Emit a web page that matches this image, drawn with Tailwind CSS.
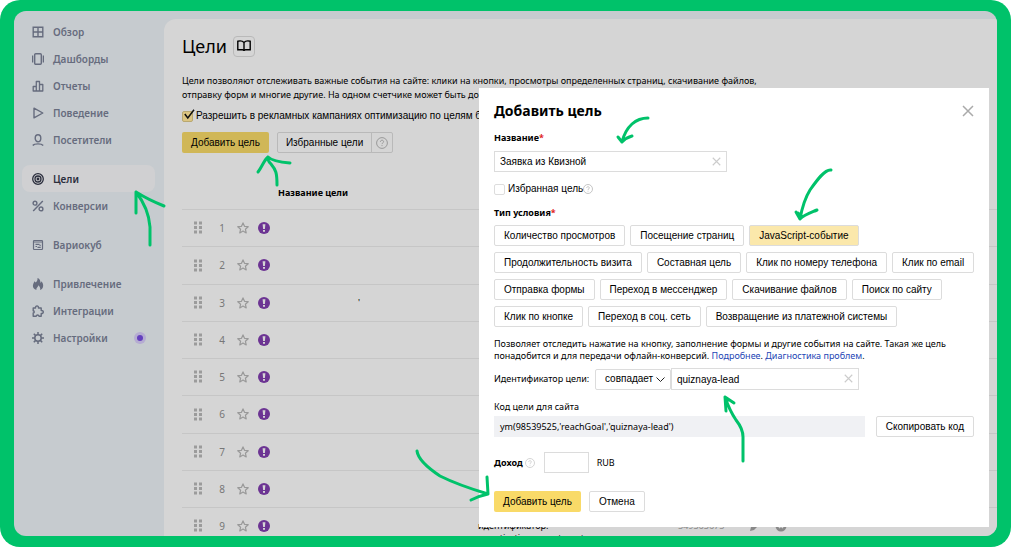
<!DOCTYPE html>
<html lang="ru">
<head>
<meta charset="utf-8">
<meta name="viewport" content="width=device-width, initial-scale=1">
<title>Цели</title>
<script src="https://cdn.jsdelivr.net/npm/@tailwindcss/browser@4"></script>
</head>
<body class="bg-white font-['Noto_Sans',sans-serif] text-[9px] leading-4 text-black">
<svg class="hidden">
  <symbol id="help" viewBox="0 0 12 12"><circle cx="6" cy="6" r="5.4" fill="none" stroke="currentColor"/><path d="M4.4 4.8c0-2.1 3.2-2.1 3.2-.1 0 1.2-1.6 1.2-1.6 2.4M6 8.1v1" fill="none" stroke="currentColor"/></symbol>
  <symbol id="cross" viewBox="0 0 12 12"><path d="M1 1l10 10M11 1L1 11" fill="none" stroke="currentColor" stroke-width="1.5"/></symbol>
  <symbol id="star" viewBox="0 0 12 12"><path d="M6 .9l1.5 3.4 3.7.4-2.8 2.5.8 3.7L6 9l-3.200 1.900.8-3.700L.8 4.700l3.700-.4z" fill="none" stroke="currentColor" stroke-width="1.200" stroke-linejoin="round"/></symbol>
  <symbol id="alert" viewBox="0 0 12 12"><circle cx="6" cy="6" r="6" fill="#6c3493"/><path d="M4.600 2.200h2.800L6.900 7H5.100zM5 8h2v1.800H5z" fill="#d5d5d5"/></symbol>
  <symbol id="grip" viewBox="0 0 8 13"><path d="M0 .5h3v3H0zM5 .5h3v3H5zM0 5h3v3H0zM5 5h3v3H5zM0 9.500h3v3H0zM5 9.500h3v3H5z" fill="#9b9b9b"/></symbol>
</svg>
<div class="relative flex h-screen overflow-hidden rounded-[20px] bg-[#00c26a] px-[14px] py-[11px]">
  <div class="flex min-w-0 flex-1 overflow-hidden rounded-xl bg-[#c6cbcf]">
    <nav class="flex w-[150px] shrink-0 flex-col pt-[7px] pl-2 text-[10px] font-semibold text-[#666c7e]">
      <a href="#" class="flex h-[27px] items-center gap-[9px] px-2.5"><svg class="size-3" viewBox="0 0 12 12" fill="none" stroke="currentColor" stroke-width="1.400"><path d="M1.200 1.200h9.600v9.600H1.200zM6 1v10M1 6h10"/></svg>Обзор</a>
      <a href="#" class="flex h-[27px] items-center gap-[9px] px-2.5"><svg class="size-3" viewBox="0 0 12 12" fill="none" stroke="currentColor" stroke-width="1.400"><rect x="2.700" y=".8" width="6.600" height="10.400" rx="1"/><path d="M.6 2.500v7M11.400 2.500v7"/></svg>Дашборды</a>
      <a href="#" class="flex h-[27px] items-center gap-[9px] px-2.5"><svg class="size-3" viewBox="0 0 12 12" fill="none" stroke="currentColor" stroke-width="1.300" stroke-linejoin="round"><path d="M4.300 11V1.500h3.200V11M4.300 6.500H1.200V11h9.600V4.500H7.500"/></svg>Отчеты</a>
      <a href="#" class="flex h-[27px] items-center gap-[9px] px-2.5"><svg class="size-3" viewBox="0 0 12 12" fill="none" stroke="currentColor" stroke-width="1.400" stroke-linejoin="round"><path d="M2 1.200L10.800 6 2 10.800z"/></svg>Поведение</a>
      <a href="#" class="flex h-[27px] items-center gap-[9px] px-2.5"><svg class="size-3" viewBox="0 0 12 12" fill="none" stroke="currentColor" stroke-width="1.400"><ellipse cx="6" cy="4.300" rx="2.800" ry="3.500"/><path d="M.8 11.500C2.500 9.300 9.500 9.300 11.200 11.500"/></svg>Посетители</a>
      <a href="#" class="mt-3 mr-[9px] flex h-[27px] items-center gap-[9px] rounded-lg bg-[#d0d0d2] px-2.5 text-[#2b2e3d]"><svg class="size-3" viewBox="0 0 12 12" fill="none" stroke="currentColor" stroke-width="1.300"><circle cx="6" cy="6" r="5.300"/><circle cx="6" cy="6" r="3"/><circle cx="6" cy="6" r=".8"/></svg>Цели</a>
      <a href="#" class="flex h-[27px] items-center gap-[9px] px-2.5"><svg class="size-3" viewBox="0 0 12 12" fill="none" stroke="currentColor" stroke-width="1.400"><circle cx="3" cy="3.200" r="1.900"/><circle cx="9" cy="8.900" r="1.900"/><path d="M10.800 1L1.200 11"/></svg>Конверсии</a>
      <a href="#" class="mt-3 flex h-[27px] items-center gap-[9px] px-2.5"><svg class="size-3" viewBox="0 0 12 12" fill="none" stroke="currentColor" stroke-width="1.200"><rect x="1.500" y="1.500" width="9" height="9" rx=".8"/><path d="M1.500 3h9M3.500 5.300h4M5.500 8.300h3.200M3.500 7.500h1.500M7.500 6.300h1.200"/></svg>Вариокуб</a>
      <a href="#" class="mt-3 flex h-[27px] items-center gap-[9px] px-2.5"><svg class="size-3" viewBox="0 0 12 12" fill="currentColor"><path d="M5.500 0C9 1.500 8 4 8.800 5L9.500 3.200C11 5 11.500 7 11 9c-.4 1.500-1.500 2.500-3 3 .8-2-.3-3.400-1.700-4.800C6.200 9 4 9.500 4.500 12 2 11.500.7 9.800.9 7.600 1 5.800 2 4.800 2.400 3.200l1.300 1.300C4.800 3.500 5.800 2 5.500 0z"/></svg>Привлечение</a>
      <a href="#" class="flex h-[27px] items-center gap-[9px] px-2.5"><svg class="size-3" viewBox="0 0 12 12" fill="none" stroke="currentColor" stroke-width="1.400" stroke-linejoin="round"><path d="M1.200 3h2.300c-.4-2.800 3.400-2.800 3 0h2.700v2.500c2.800-.3 2.800 3.300 0 3v2.700H7c-.3-1.700-2.500-1.700-2.800 0h-3V8c1.400-.2 1.400-2 0-2.200z"/></svg>Интеграции</a>
      <a href="#" class="flex h-[27px] items-center gap-[9px] px-2.5"><svg class="size-3" viewBox="0 0 12 12" fill="none" stroke="currentColor" stroke-width="1.500"><circle cx="6" cy="6" r="3.200"/><path d="M6 3V0M6 12V9M3 6H0M12 6H9M3.900 3.900L1.800 1.800M8.100 3.900l2.100-2.100M3.900 8.100l-2.100 2.100M8.100 8.100l2.100 2.100"/></svg>Настройки<span class="mr-2 ml-auto flex size-3 items-center justify-center rounded-full bg-[#b5acd2]"><span class="size-1.5 rounded-full bg-[#6440bd]"></span></span></a>
    </nav>
    <main class="mt-2 min-w-0 flex-1 overflow-hidden rounded-tl-xl bg-[#d5d5d5] pt-[15px] pl-[18px]">
      <div class="flex items-center gap-1.5">
        <h1 class="text-[18px] leading-6">Цели</h1>
        <button type="button" aria-label="Справка" class="flex h-[21px] w-[22px] items-center justify-center rounded-sm border border-[#b9b9b9]"><svg class="h-3 w-3.5" viewBox="0 0 14 12" fill="none" stroke="currentColor" stroke-width="1.400"><path d="M7 10.500V2.500C5.500.8 2.500.8.8 1.200v8.600h4.700c1 0 1.500.7 1.500 1.200 0-.5.5-1.200 1.500-1.200h4.700V1.200C11.500.8 8.500.8 7 2.500"/></svg></button>
      </div>
      <p class="mt-4 leading-[14px]">Цели позволяют отслеживать важные события на сайте: клики на кнопки, просмотры определенных страниц, скачивание файлов,<br>отправку форм и многие другие. На одном счетчике может быть до 200 целей.</p>
      <label class="mt-1.5 flex items-center gap-[3px] font-['Liberation_Sans',sans-serif] text-[10px] whitespace-nowrap"><span class="relative size-[11px] shrink-0"><input type="checkbox" checked class="block size-[11px] appearance-none rounded-xs border border-[#b9a871] bg-[#dcc582]"><svg class="pointer-events-none absolute -top-0.5 left-0.5 h-3 w-[11px]" viewBox="0 0 11 12" fill="none" stroke="#111" stroke-width="1.500"><path d="M.8 5l3 4L10 .8"/></svg></span>Разрешить в рекламных кампаниях оптимизацию по целям без доступа к счетчику</label>
      <div class="mt-2 flex gap-2 font-['Liberation_Sans',sans-serif] text-[10px]">
        <button type="button" class="h-[21px] rounded-xs bg-[#d0b757] px-[9px]">Добавить цель</button>
        <div class="flex"><button type="button" class="h-[21px] rounded-l-xs border border-[#b9b9b9] px-2">Избранные цели</button><button type="button" aria-label="Помощь" class="-ml-px flex h-[21px] w-[22px] items-center justify-center rounded-r-xs border border-[#b9b9b9] text-[#999]"><svg class="size-3"><use href="#help"/></svg></button></div>
      </div>
      <table class="mt-8 w-full table-fixed text-left">
        <thead><tr class="h-6"><th class="w-24"></th><th class="w-[200px] align-top font-bold">Название цели</th><th class="w-[200px]"></th><th></th></tr></thead>
        <tbody id="goals" class="[&>tr]:h-[37px] [&>tr:nth-child(4n+2)]:h-[38px]"></tbody>
      </table>
    </main>
  </div>

  <section role="dialog" aria-labelledby="dlg" class="absolute top-[88px] right-[22px] bottom-5 w-[510px] bg-white px-[15px] pt-[11px]">
    <div class="flex items-center justify-between">
      <h2 id="dlg" class="text-[14px] leading-6 font-bold">Добавить цель</h2>
      <button type="button" aria-label="Закрыть" class="text-[#aaa]"><svg class="size-3"><use href="#cross"/></svg></button>
    </div>
    <label for="name" class="mt-[7px] block font-bold">Название<span class="text-[#e02020]">*</span></label>
    <div class="relative mt-[5px] w-[233px]"><input id="name" type="text" value="Заявка из Квизной" class="block h-[21px] w-full border border-[#dcdcdc] px-[5px] font-['Liberation_Sans',sans-serif] text-[10px] outline-none"><button type="button" aria-label="Очистить" class="absolute top-1.5 right-1.5 text-[#ccc]"><svg class="block size-[9px]"><use href="#cross"/></svg></button></div>
    <div class="mt-[9px] flex items-center font-['Liberation_Sans',sans-serif] text-[10px]"><label class="flex items-center gap-[3px]"><input type="checkbox" class="size-[11px] appearance-none rounded-xs border border-[#ddd]">Избранная цель</label><svg class="size-2.5 text-[#bbb]"><use href="#help"/></svg></div>
    <h3 class="mt-2 font-bold">Тип условия<span class="text-[#e02020]">*</span></h3>
    <div class="mt-1 -mr-1 flex flex-wrap gap-x-[5px] gap-y-1.5 font-['Liberation_Sans',sans-serif] text-[10px] [&>button]:h-[21px] [&>button]:rounded-xs [&>button]:border [&>button]:border-[#dcdcdc] [&>button]:px-[9px]">
      <button type="button">Количество просмотров</button><button type="button">Посещение страниц</button><button type="button" class="bg-[#fbe8ab]">JavaScript-событие</button>
      <button type="button">Продолжительность визита</button><button type="button">Составная цель</button><button type="button">Клик по номеру телефона</button><button type="button">Клик по email</button>
      <button type="button">Отправка формы</button><button type="button">Переход в мессенджер</button><button type="button">Скачивание файлов</button><button type="button">Поиск по сайту</button>
      <button type="button">Клик по кнопке</button><button type="button">Переход в соц. сеть</button><button type="button">Возвращение из платежной системы</button>
    </div>
    <p class="mt-[11px] leading-3">Позволяет отследить нажатие на кнопку, заполнение формы и другие события на сайте. Такая же цель<br>понадобится и для передачи офлайн-конверсий. <a href="#" class="text-[#1d46b5]">Подробнее</a>. <a href="#" class="text-[#1d46b5]">Диагностика проблем</a>.</p>
    <div class="mt-1.5 flex items-center">
      <label for="goal-id" class="w-[101px]">Идентификатор цели:</label>
      <div class="relative"><select aria-label="Условие" class="block h-[21px] w-[76px] appearance-none rounded-xs border border-[#dcdcdc] px-[9px] font-['Liberation_Sans',sans-serif] text-[10px]"><option>совпадает</option></select><svg class="pointer-events-none absolute top-2 right-1.5 h-[5px] w-[9px]" viewBox="0 0 9 5" fill="none" stroke="#222"><path d="M.5.5l4 4 4-4"/></svg></div>
      <div class="relative w-[188px]"><input id="goal-id" type="text" value="quiznaya-lead" class="block h-[22px] w-full border border-[#dcdcdc] px-[5px] font-['Liberation_Sans',sans-serif] text-[10px] outline-none"><button type="button" aria-label="Очистить" class="absolute top-1.5 right-1.5 text-[#ccc]"><svg class="block size-[9px]"><use href="#cross"/></svg></button></div>
    </div>
    <p class="mt-[9px]">Код цели для сайта</p>
    <div class="mt-px flex gap-[11px]"><code class="flex h-[21px] flex-1 items-center bg-[#f0f1f4] px-1.5 font-['Noto_Sans',sans-serif] text-[9px]">ym(98539525,'reachGoal','quiznaya-lead')</code><button type="button" class="h-[21px] rounded-xs border border-[#dcdcdc] px-[9px] font-['Liberation_Sans',sans-serif] text-[10px]">Скопировать код</button></div>
    <div class="mt-[15px] flex items-center"><label for="income" class="mr-0.5 font-bold">Доход</label><svg class="size-2.5 text-[#ccc]"><use href="#help"/></svg><input id="income" type="text" class="ml-[9px] h-[21px] w-[45px] border border-[#dcdcdc]"><span class="ml-2">RUB</span></div>
    <div class="mt-[18px] flex gap-2 font-['Liberation_Sans',sans-serif] text-[10px]"><button type="button" class="h-[21px] rounded-xs bg-[#f9da68] px-[9px]">Добавить цель</button><button type="button" class="h-[21px] rounded-xs border border-[#dcdcdc] px-[9px]">Отмена</button></div>
  </section>

  <svg class="pointer-events-none absolute top-0 left-0" width="1011" height="547" viewBox="0 0 1011 547" fill="none" stroke="#00c26a" stroke-width="3" stroke-linecap="round" stroke-linejoin="round">
    <path d="M150 245v-18c-1-14-7-26-14-35M136 213v-21c8 5 18 10 28 14"/>
    <path d="M277 185c0-12-1-15-6-21-3-3-4-5-3-7M258 172c4-5 6-12 10-15 3 3 10 5 22 6"/>
    <path d="M648 118c-12 0-22 8-26 24M618 137l4 5c3-3 6-5 10-6"/>
    <path d="M831 170c-6-1-14 10-21 20-5 8-8 18-10 29M796 212l4 7c4-4 10-6 17-9M798 213l3 4"/>
    <path d="M743 461v-24c0-6-3-12-7-17-4-6-8-14-11-23M726 411l-1-14 9 6M727 400v3"/>
    <path d="M417 451c1 8 11 17 23 25 10 5 28 12 48 18M487 477l1 17c-5 1-11 3-17 6"/>
  </svg>
</div>
<script>
  const body = document.getElementById('goals');
  const row = n => `<tr class="border-t border-[#c6c6c6]">
    <td class="p-0"><div class="flex items-center pl-3 text-[#777]"><svg class="h-[13px] w-2"><use href="#grip"/></svg><span class="ml-[5px] w-[30px] text-center text-[10px]">${n}</span><svg class="size-3 text-[#999]"><use href="#star"/></svg><svg class="ml-[9px] size-3 shrink-0"><use href="#alert"/></svg></div></td>
    <td class="p-0 pl-20">${n === 3 ? "'" : ''}</td>
    ${n === 9 ? `<td class="p-0 pt-3 align-top leading-3">идентификатор:<br>quantization-page-target</td><td class="p-0 text-[#888]"><div class="flex items-center"><span>549363675</span><svg class="ml-[25px] size-3" viewBox="0 0 12 12" fill="#888"><path d="M1 11l1-4 6-6 3 3-6 6z"/></svg><svg class="ml-3.5 size-3" viewBox="0 0 12 12"><circle cx="6" cy="6" r="5.500" fill="#888"/><path d="M4 4l4 4M8 4L4 8" stroke="#d5d5d5" stroke-width="1.500"/></svg></div></td>` : '<td></td><td></td>'}
  </tr>`;
  body.innerHTML = [1,2,3,4,5,6,7,8,9].map(row).join('');
</script>
</body>
</html>
